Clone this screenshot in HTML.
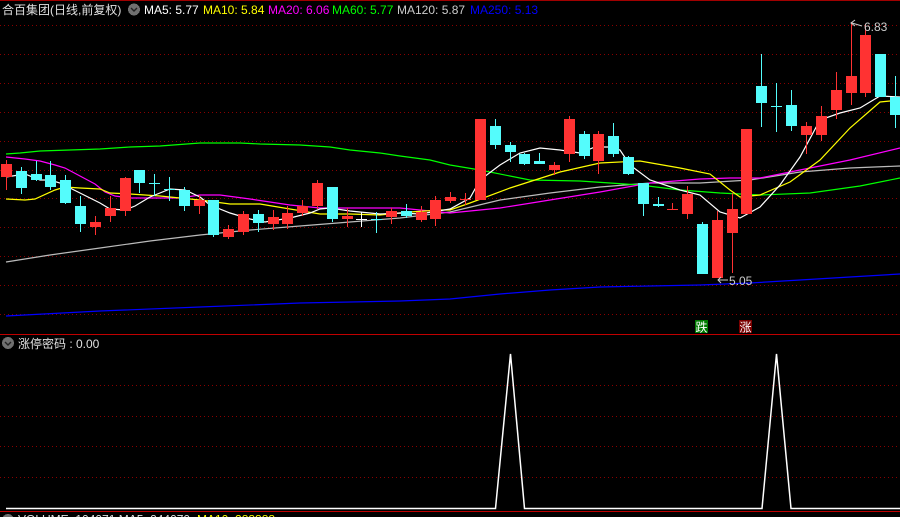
<!DOCTYPE html>
<html><head><meta charset="utf-8"><style>
html,body{margin:0;padding:0;background:#000;width:900px;height:517px;overflow:hidden}
svg{display:block}
text{font-family:"Liberation Sans","Noto Sans CJK SC",sans-serif;font-size:12px}
</style></head><body>
<svg width="900" height="517" viewBox="0 0 900 517" xmlns="http://www.w3.org/2000/svg" shape-rendering="crispEdges">
<rect x="0" y="0" width="900" height="517" fill="#000"/>
<line x1="0" y1="0.5" x2="900" y2="0.5" stroke="#a00000"/>
<g stroke="#8a0000" stroke-dasharray="1,3">
<line x1="0" y1="25.5" x2="900" y2="25.5"/><line x1="0" y1="54.5" x2="900" y2="54.5"/>
<line x1="0" y1="83.5" x2="900" y2="83.5"/><line x1="0" y1="112.5" x2="900" y2="112.5"/>
<line x1="0" y1="141.5" x2="900" y2="141.5"/><line x1="0" y1="170.5" x2="900" y2="170.5"/>
<line x1="0" y1="198.5" x2="900" y2="198.5"/><line x1="0" y1="227.5" x2="900" y2="227.5"/>
<line x1="0" y1="256.5" x2="900" y2="256.5"/><line x1="0" y1="285.5" x2="900" y2="285.5"/>
<line x1="0" y1="314.5" x2="900" y2="314.5"/>
<line x1="0" y1="385.5" x2="900" y2="385.5"/><line x1="0" y1="416.5" x2="900" y2="416.5"/>
<line x1="0" y1="446.5" x2="900" y2="446.5"/><line x1="0" y1="477.5" x2="900" y2="477.5"/>
</g>
<line x1="0" y1="334.5" x2="900" y2="334.5" stroke="#c00000"/>
<line x1="0" y1="511.5" x2="900" y2="511.5" stroke="#c00000"/>

<g fill="none" shape-rendering="auto" stroke-width="1.2">
<polyline stroke="#0000ff" points="6,316 100,311 200,307 300,303 400,301 450,299 500,294 550,290 600,287 650,286 700,285 750,283 800,280 850,277 900,274"/>
<polyline stroke="#bbbbbb" points="6,262 50,255 100,248 150,241 200,235 250,230 300,226 350,222 400,218 450,212 500,200 550,193 600,187 650,183 700,183 750,180 800,172 850,168 900,166"/>
<polyline stroke="#00ff00" points="6,154 20,153 40,151 70,150 100,149 130,147 160,146 200,143 240,143 260,144 300,145 330,147 350,150 380,153 400,156 430,160 450,165 480,170 530,180 580,181 640,185 680,190 720,193 760,195 810,193 860,186 900,178"/>
<polyline stroke="#ff00ff" points="6,157 25,159 40,161 55,165 65,168 80,176 95,184 105,192 115,196 130,198 150,198 180,198 200,195 220,195 250,199 270,202 290,205 320,208 350,208 400,208 420,210 450,213 470,211 500,208 550,200 600,192 650,183 700,179 730,178 760,178 800,170 850,160 900,148"/>
<polyline stroke="#ffff00" points="6,199 25,200 35,199 55,190 65,187 80,188 100,189 110,193 130,194 160,196 200,200 230,204 260,204 290,209 320,214 350,214 380,215 410,212 440,210 450,210 470,203 510,188 560,172 600,163 640,161 680,168 710,174 730,190 740,197 760,195 790,182 820,160 850,128 880,102 900,100"/>
<polyline stroke="#ffffff" points="6,177 25,174 40,180 50,180 60,183 80,193 100,203 110,209 125,210 135,206 150,197 170,189 185,190 200,197 210,205 230,213 250,219 265,222 290,218 310,213 320,209 330,208 350,211 380,214 400,213 420,214 450,209 470,198 480,180 500,165 520,153 540,148 560,150 580,153 595,147 610,147 620,150 630,165 650,180 680,190 700,195 720,212 740,218 760,207 780,185 800,157 820,120 840,113 860,108 880,96 900,97"/>
</g>

<g stroke-width="1">
<g stroke="#ff3232">
<line x1="6.5" y1="160" x2="6.5" y2="190"/><line x1="95.5" y1="216" x2="95.5" y2="235"/>
<line x1="110.5" y1="196" x2="110.5" y2="222"/><line x1="125.5" y1="177" x2="125.5" y2="216"/>
<line x1="199.5" y1="195" x2="199.5" y2="214"/><line x1="228.5" y1="225" x2="228.5" y2="239"/>
<line x1="243.5" y1="211" x2="243.5" y2="235"/><line x1="273.5" y1="210" x2="273.5" y2="230"/>
<line x1="287.5" y1="206" x2="287.5" y2="229"/><line x1="302.5" y1="200" x2="302.5" y2="216"/>
<line x1="317.5" y1="180" x2="317.5" y2="209"/><line x1="347.5" y1="208" x2="347.5" y2="227"/>
<line x1="391.5" y1="208" x2="391.5" y2="224"/><line x1="421.5" y1="206" x2="421.5" y2="222"/>
<line x1="435.5" y1="196" x2="435.5" y2="226"/><line x1="450.5" y1="192" x2="450.5" y2="203"/>
<line x1="465.5" y1="193" x2="465.5" y2="205"/><line x1="460" y1="199.5" x2="471" y2="199.5"/>
<line x1="554.5" y1="162" x2="554.5" y2="175"/><line x1="569.5" y1="116" x2="569.5" y2="162"/>
<line x1="598.5" y1="131" x2="598.5" y2="174"/><line x1="672.5" y1="203" x2="672.5" y2="210"/>
<line x1="667" y1="209.5" x2="678" y2="209.5"/><line x1="687.5" y1="186" x2="687.5" y2="219"/>
<line x1="717.5" y1="211" x2="717.5" y2="278"/><line x1="732.5" y1="193" x2="732.5" y2="273"/>
<line x1="806.5" y1="122" x2="806.5" y2="154"/><line x1="821.5" y1="106" x2="821.5" y2="141"/>
<line x1="836.5" y1="72" x2="836.5" y2="119"/><line x1="851.5" y1="22" x2="851.5" y2="105"/>
<line x1="865.5" y1="24" x2="865.5" y2="97"/>
</g>
<g stroke="#54fcfc">
<line x1="21.5" y1="167" x2="21.5" y2="194"/><line x1="36.5" y1="161" x2="36.5" y2="181"/>
<line x1="50.5" y1="161" x2="50.5" y2="190"/><line x1="65.5" y1="175" x2="65.5" y2="204"/>
<line x1="80.5" y1="196" x2="80.5" y2="232"/><line x1="139.5" y1="170" x2="139.5" y2="193"/>
<line x1="154.5" y1="174" x2="154.5" y2="196"/><line x1="149" y1="183.5" x2="160" y2="183.5"/>
<line x1="169.5" y1="177" x2="169.5" y2="201"/><line x1="164" y1="189.5" x2="175" y2="189.5"/>
<line x1="184.5" y1="187" x2="184.5" y2="211"/><line x1="213.5" y1="200" x2="213.5" y2="237"/>
<line x1="258.5" y1="210" x2="258.5" y2="232"/><line x1="332.5" y1="187" x2="332.5" y2="222"/>
<line x1="376.5" y1="212" x2="376.5" y2="233"/><line x1="371" y1="219.5" x2="382" y2="219.5"/>
<line x1="406.5" y1="204" x2="406.5" y2="218"/>
<line x1="495.5" y1="119" x2="495.5" y2="149"/><line x1="510.5" y1="142" x2="510.5" y2="162"/>
<line x1="524.5" y1="153" x2="524.5" y2="165"/><line x1="539.5" y1="153" x2="539.5" y2="164"/>
<line x1="584.5" y1="131" x2="584.5" y2="159"/><line x1="613.5" y1="123" x2="613.5" y2="157"/>
<line x1="628.5" y1="156" x2="628.5" y2="175"/><line x1="643.5" y1="183" x2="643.5" y2="216"/>
<line x1="658.5" y1="197" x2="658.5" y2="207"/><line x1="702.5" y1="222" x2="702.5" y2="274"/>
<line x1="761.5" y1="54" x2="761.5" y2="127"/><line x1="776.5" y1="83" x2="776.5" y2="132"/>
<line x1="771" y1="106.5" x2="782" y2="106.5"/><line x1="791.5" y1="90" x2="791.5" y2="131"/>
<line x1="880.5" y1="54" x2="880.5" y2="97"/><line x1="895.5" y1="76" x2="895.5" y2="128"/>
</g>
<g stroke="#fff"><line x1="361.5" y1="212" x2="361.5" y2="227"/><line x1="356" y1="219.5" x2="367" y2="219.5"/></g>
<g fill="#ff3232">
<rect x="1" y="164" width="11" height="13"/><rect x="90" y="222" width="11" height="5"/>
<rect x="105" y="208" width="11" height="8"/><rect x="120" y="178" width="11" height="33"/>
<rect x="194" y="200" width="11" height="6"/><rect x="223" y="229" width="11" height="8"/>
<rect x="238" y="214" width="11" height="18"/><rect x="268" y="217" width="11" height="7"/>
<rect x="282" y="213" width="11" height="11"/><rect x="297" y="206" width="11" height="7"/>
<rect x="312" y="183" width="11" height="23"/><rect x="342" y="216" width="11" height="3"/>
<rect x="386" y="211" width="11" height="6"/><rect x="416" y="212" width="11" height="8"/>
<rect x="430" y="200" width="11" height="19"/><rect x="445" y="197" width="11" height="4"/>
<rect x="475" y="119" width="11" height="81"/><rect x="549" y="165" width="11" height="5"/>
<rect x="564" y="119" width="11" height="35"/><rect x="593" y="134" width="11" height="27"/>
<rect x="682" y="194" width="11" height="20"/><rect x="712" y="220" width="11" height="58"/>
<rect x="727" y="209" width="11" height="24"/><rect x="741" y="129" width="11" height="85"/>
<rect x="801" y="126" width="11" height="9"/><rect x="816" y="116" width="11" height="19"/>
<rect x="831" y="90" width="11" height="20"/><rect x="846" y="76" width="11" height="17"/>
<rect x="860" y="35" width="11" height="58"/>
</g>
<g fill="#54fcfc">
<rect x="16" y="171" width="11" height="17"/><rect x="31" y="174" width="11" height="6"/>
<rect x="45" y="175" width="11" height="12"/><rect x="60" y="180" width="11" height="23"/>
<rect x="75" y="206" width="11" height="18"/><rect x="134" y="170" width="11" height="13"/>
<rect x="179" y="190" width="11" height="16"/><rect x="208" y="200" width="11" height="35"/>
<rect x="253" y="214" width="11" height="9"/><rect x="327" y="187" width="11" height="32"/>
<rect x="401" y="211" width="11" height="5"/>
<rect x="490" y="126" width="11" height="19"/><rect x="505" y="145" width="11" height="7"/>
<rect x="519" y="154" width="11" height="10"/><rect x="534" y="161" width="11" height="3"/>
<rect x="579" y="134" width="11" height="22"/><rect x="608" y="136" width="11" height="18"/>
<rect x="623" y="157" width="11" height="17"/><rect x="638" y="183" width="11" height="21"/>
<rect x="653" y="204" width="11" height="2"/><rect x="697" y="224" width="11" height="50"/>
<rect x="756" y="86" width="11" height="17"/><rect x="786" y="105" width="11" height="21"/>
<rect x="875" y="54" width="11" height="43"/><rect x="890" y="97" width="10" height="18"/>
</g>
</g>

<g fill="#cccccc" stroke="none">
<text x="864" y="31" font-size="12">6.83</text>
<text x="729" y="285" font-size="12">5.05</text>
</g>
<g stroke="#cccccc" fill="none" shape-rendering="auto">
<polyline points="852,23 862,26"/><polyline points="855,20 851,23 855,26"/>
<polyline points="718,280 728,280"/><polyline points="721,277 718,280 721,283"/>
</g>
<rect x="695" y="320" width="13" height="13" fill="#007a00"/>
<text x="695.5" y="331.5" fill="#fff" font-size="12">跌</text>
<rect x="739" y="320" width="13" height="13" fill="#7a0000"/>
<text x="739.5" y="331.5" fill="#fff" font-size="12">涨</text>

<text x="2" y="14" fill="#e0e0e0" font-size="13">合百集团(日线,前复权)</text>
<circle cx="134" cy="9.5" r="6" fill="#707070"/>
<polyline points="131,8 134,11 137,8" stroke="#222" fill="none" stroke-width="1.4" shape-rendering="auto"/>
<text x="144" y="14" fill="#ffffff">MA5: 5.77</text>
<text x="203" y="14" fill="#ffff00">MA10: 5.84</text>
<text x="268" y="14" fill="#ff00ff">MA20: 6.06</text>
<text x="332" y="14" fill="#00ff00">MA60: 5.77</text>
<text x="397" y="14" fill="#cccccc">MA120: 5.87</text>
<text x="470" y="14" fill="#0000ff">MA250: 5.13</text>

<circle cx="8" cy="343" r="6" fill="#707070"/>
<polyline points="5,342 8,345 11,342" stroke="#222" fill="none" stroke-width="1.4" shape-rendering="auto"/>
<text x="18" y="348" fill="#e0e0e0">涨停密码 : 0.00</text>
<polyline fill="none" stroke="#fff" stroke-width="1.5" shape-rendering="auto" points="6,508.5 495.5,508.5 510.5,354 524.5,508.5 762,508.5 776.5,354 791,508.5 900,508.5"/>

<circle cx="8" cy="520" r="6" fill="#707070"/>
<text x="18" y="523.5" fill="#e0e0e0">VOLUME: 104071  MA5: 244070</text>
<text x="197" y="523.5" fill="#ffff00">MA10: 288888</text>
</svg>
</body></html>
